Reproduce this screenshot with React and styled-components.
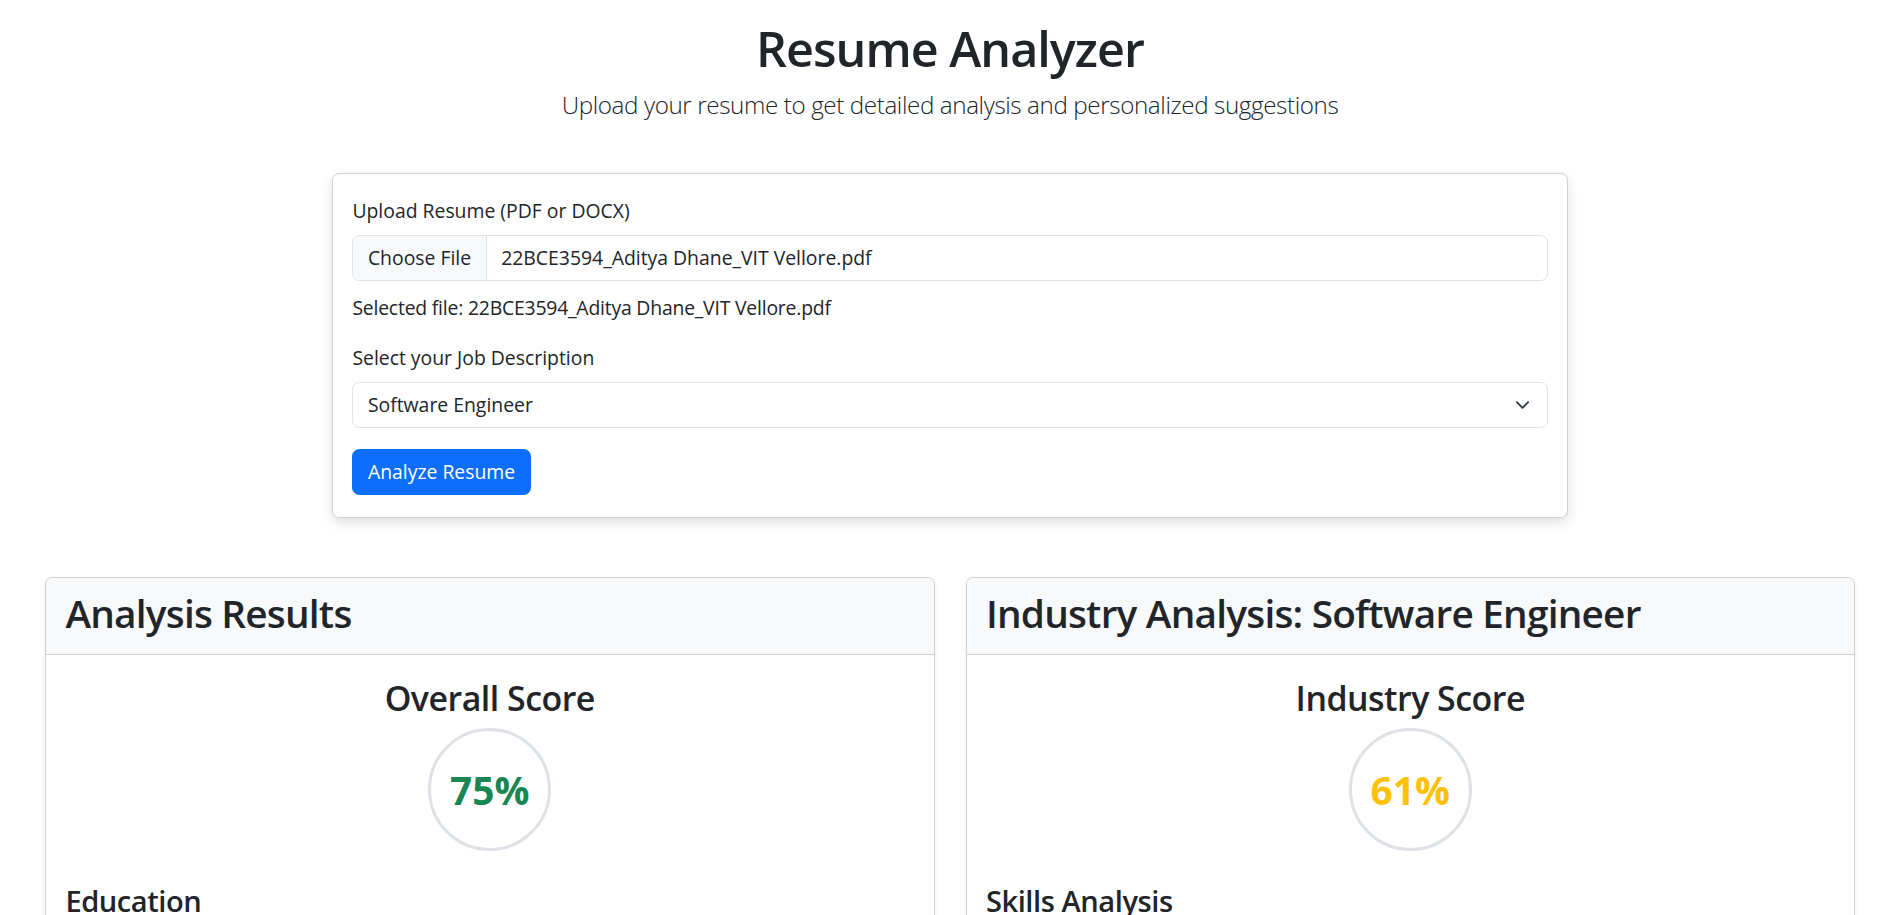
import React, { useState } from 'react'
import styled, { createGlobalStyle } from 'styled-components'

const GlobalStyle = createGlobalStyle`
  *, *::before, *::after {
    box-sizing: border-box;
  }

  html {
    font-size: 19.39px;
    scrollbar-width: none;
  }

  body {
    margin: 0;
    font-family: "Open Sans", "Noto Sans", "Liberation Sans", sans-serif;
    font-size: 1rem;
    line-height: 1.5;
    color: #212529;
    background: #fff;
  }
`

const JOBS = ['Software Engineer', 'Data Scientist', 'Product Manager', 'Web Developer']

const scoreColor = (score) => {
  if (score >= 70) return '#198754'
  if (score >= 50) return '#ffc107'
  return '#dc3545'
}

const App = () => {
  const [fileName] = useState('22BCE3594_Aditya Dhane_VIT Vellore.pdf')
  const [job, setJob] = useState('Software Engineer')

  const results = [
    {
      title: 'Analysis Results',
      scoreLabel: 'Overall Score',
      score: 75,
      section: 'Education',
    },
    {
      title: `Industry Analysis: ${job}`,
      scoreLabel: 'Industry Score',
      score: 61,
      section: 'Skills Analysis',
    },
  ]

  return (
    <Page>
      <GlobalStyle />
      <Header>
        <Title>Resume Analyzer</Title>
        <Lead>Upload your resume to get detailed analysis and personalized suggestions</Lead>
      </Header>

      <UploadCard>
        <Field>
          <Label>Upload Resume (PDF or DOCX)</Label>
          <FileControl>
            <FileButton>Choose File</FileButton>
            <FileName>{fileName}</FileName>
          </FileControl>
          <SelectedFile>Selected file: {fileName}</SelectedFile>
        </Field>

        <Field>
          <Label htmlFor='job'>Select your Job Description</Label>
          <SelectWrap>
            <Select id='job' value={job} onChange={(e) => setJob(e.target.value)}>
              {JOBS.map((j) => (
                <option key={j} value={j}>
                  {j}
                </option>
              ))}
            </Select>
            <Chevron viewBox='0 0 16 16' width='19' height='15'>
              <path
                d='m2 5 6 6 6-6'
                fill='none'
                stroke='#343a40'
                strokeWidth='2'
                strokeLinecap='round'
                strokeLinejoin='round'
              />
            </Chevron>
          </SelectWrap>
        </Field>

        <PrimaryButton type='button'>Analyze Resume</PrimaryButton>
      </UploadCard>

      <Results>
        {results.map((r) => (
          <ResultCard key={r.scoreLabel}>
            <CardHeader>
              <CardTitle>{r.title}</CardTitle>
            </CardHeader>
            <CardBody>
              <ScoreBlock>
                <ScoreLabel>{r.scoreLabel}</ScoreLabel>
                <ScoreCircle $color={scoreColor(r.score)}>{r.score}%</ScoreCircle>
              </ScoreBlock>
              <SectionTitle>{r.section}</SectionTitle>
            </CardBody>
          </ResultCard>
        ))}
      </Results>
    </Page>
  )
}

const Page = styled.main`
  padding: 19px 45px 40px;
`

const Header = styled.header`
  text-align: center;
  margin-bottom: 50px;
`

const Title = styled.h1`
  margin: 0 0 0.5rem;
  font-size: 2.5rem;
  font-weight: 600;
  line-height: 1.2;
  letter-spacing: -0.02em;
`

const Lead = styled.p`
  margin: 0;
  font-size: 1.25rem;
  font-weight: 300;
  letter-spacing: -0.4px;
`

const UploadCard = styled.section`
  max-width: 1236px;
  margin: 0 auto;
  padding: 22px 1rem 22px;
  background: #fff;
  border: 1px solid rgba(0, 0, 0, 0.175);
  border-radius: 0.375rem;
  box-shadow: 0 0.25rem 0.6rem rgba(0, 0, 0, 0.12);
`

const Field = styled.div`
  margin-bottom: 21px;
`

const Label = styled.label`
  display: block;
  margin-bottom: 0.5rem;
`

const FileControl = styled.div`
  display: flex;
  height: 46px;
  border: 1px solid #dee2e6;
  border-radius: 0.375rem;
  overflow: hidden;
`

const FileButton = styled.span`
  display: flex;
  align-items: center;
  padding: 0 0.75rem;
  background: #f8f9fa;
  border-right: 1px solid #dee2e6;
`

const FileName = styled.span`
  display: flex;
  align-items: center;
  padding: 0 0.75rem;
`

const SelectedFile = styled.div`
  margin-top: 12px;
  letter-spacing: -0.2px;
`

const SelectWrap = styled.div`
  position: relative;
`

const Select = styled.select`
  display: block;
  width: 100%;
  height: 46px;
  padding: 0 2.25rem 0 0.75rem;
  font: inherit;
  color: #212529;
  background: #fff;
  border: 1px solid #dee2e6;
  border-radius: 0.375rem;
  appearance: none;
  outline: none;
`

const Chevron = styled.svg`
  position: absolute;
  right: calc(0.75rem + 1px);
  top: 50%;
  transform: translateY(-50%);
  pointer-events: none;
`

const PrimaryButton = styled.button`
  height: 46px;
  padding: 0 0.75rem;
  font: inherit;
  color: #fff;
  background: #0d6efd;
  border: 1px solid #0d6efd;
  border-radius: 0.375rem;
  cursor: pointer;
`

const Results = styled.div`
  display: grid;
  grid-template-columns: 1fr 1fr;
  gap: 31px;
  margin-top: 59px;
`

const ResultCard = styled.section`
  background: #fff;
  border: 1px solid rgba(0, 0, 0, 0.175);
  border-radius: 0.375rem;
  box-shadow: 0 0.125rem 0.25rem rgba(0, 0, 0, 0.075);
  overflow: hidden;
`

const CardHeader = styled.div`
  padding: 12px 1rem 8px;
  background: #f8f9fa;
  border-bottom: 1px solid rgba(0, 0, 0, 0.175);
`

const CardTitle = styled.h2`
  margin: 0 0 0.5rem;
  font-size: 2rem;
  font-weight: 600;
  line-height: 1.2;
  letter-spacing: -0.02em;
`

const CardBody = styled.div`
  padding: 23px 1rem 1rem;
`

const ScoreBlock = styled.div`
  text-align: center;
  margin-bottom: 33px;
`

const ScoreLabel = styled.h3`
  margin: 0 0 0.5rem;
  font-size: 1.75rem;
  font-weight: 600;
  line-height: 1.2;
  letter-spacing: -0.015em;
`

const ScoreCircle = styled.div`
  display: flex;
  align-items: center;
  justify-content: center;
  width: 123px;
  height: 123px;
  margin: 0 auto;
  font-size: 2rem;
  font-weight: 700;
  color: ${(p) => p.$color};
  border: 3px solid #dee2e6;
  border-radius: 50%;
`

const SectionTitle = styled.h4`
  margin: 0 0 0.5rem;
  font-size: 1.5rem;
  font-weight: 600;
  line-height: 1.2;
  letter-spacing: -0.015em;
`

export default App
